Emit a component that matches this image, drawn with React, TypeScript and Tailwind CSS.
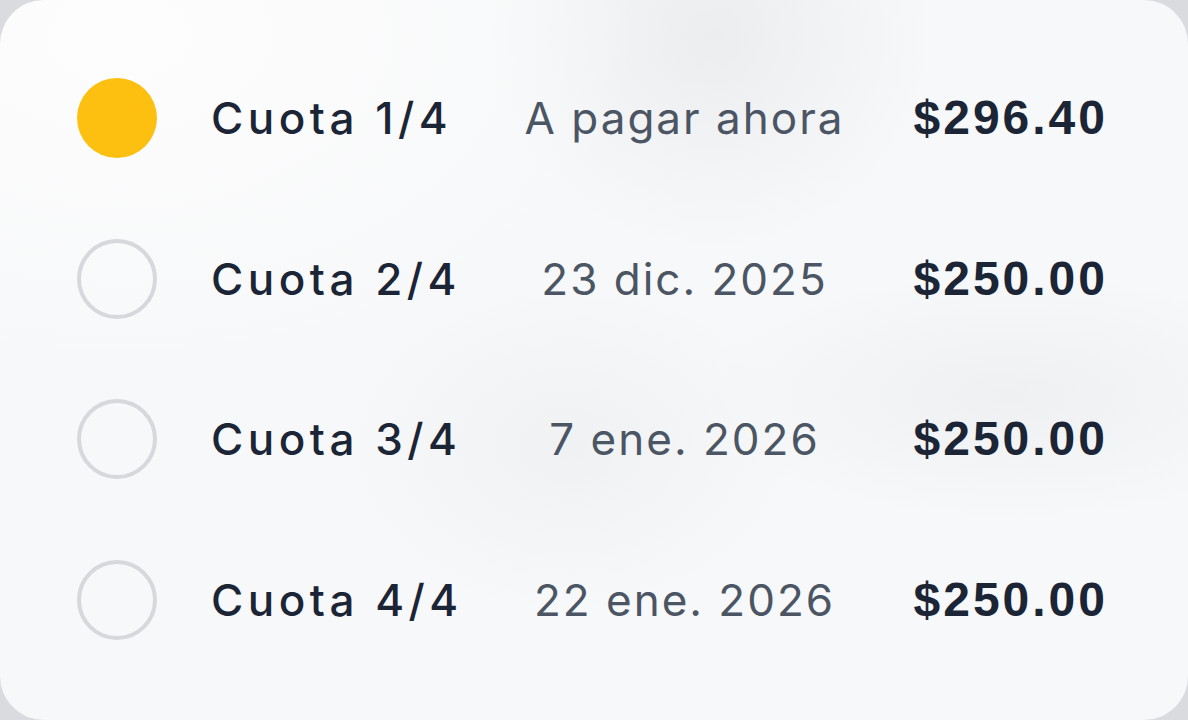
import React from 'react';

interface Cuota {
  label: string;
  when: string;
  amount: string;
  current?: boolean;
}

const cuotas: Cuota[] = [
  { label: 'Cuota 1/4', when: 'A pagar ahora', amount: '$296.40', current: true },
  { label: 'Cuota 2/4', when: '23 dic. 2025', amount: '$250.00' },
  { label: 'Cuota 3/4', when: '7 ene. 2026', amount: '$250.00' },
  { label: 'Cuota 4/4', when: '22 ene. 2026', amount: '$250.00' },
];

const App: React.FC = () => {
  return (
    <div className="w-[1188px] h-[720px] bg-[#d9dbdf] overflow-hidden">
      <div className="h-full rounded-[44px] bg-[#f7f8f9] bg-[radial-gradient(ellipse_at_10%_5%,#fdfdfe_0%,transparent_35%),radial-gradient(ellipse_at_60%_5%,#ecedef_0%,transparent_22%),radial-gradient(ellipse_at_48%_62%,#f0f1f3_0%,transparent_26%),radial-gradient(ellipse_at_85%_55%,#eff0f2_0%,transparent_22%)] pt-[38px] pl-[77px] pr-[80px] font-['Inter','Liberation_Sans',sans-serif]">
        {cuotas.map((c) => (
          <div key={c.label} className="flex items-center h-[160.6px]">
            {/* indicador */}
            {c.current ? (
              <div className="w-20 h-20 rounded-full bg-[#fdc010] shrink-0" />
            ) : (
              <div className="w-20 h-20 rounded-full border-4 border-[#d6d8dc] shrink-0" />
            )}
            <div className="ml-[54px] w-[260px] text-[44px] font-medium text-[#1b2535] tracking-[4.5px]">
              {c.label}
            </div>
            <div className="flex-1 text-center text-[44px] text-[#4b5563] tracking-[2px]">
              {c.when}
            </div>
            <div className="w-[210px] text-right text-[48px] font-bold text-[#1b2535] tracking-[3px] font-['Liberation_Sans',sans-serif]">
              {c.amount}
            </div>
          </div>
        ))}
      </div>
    </div>
  );
};

export default App;
